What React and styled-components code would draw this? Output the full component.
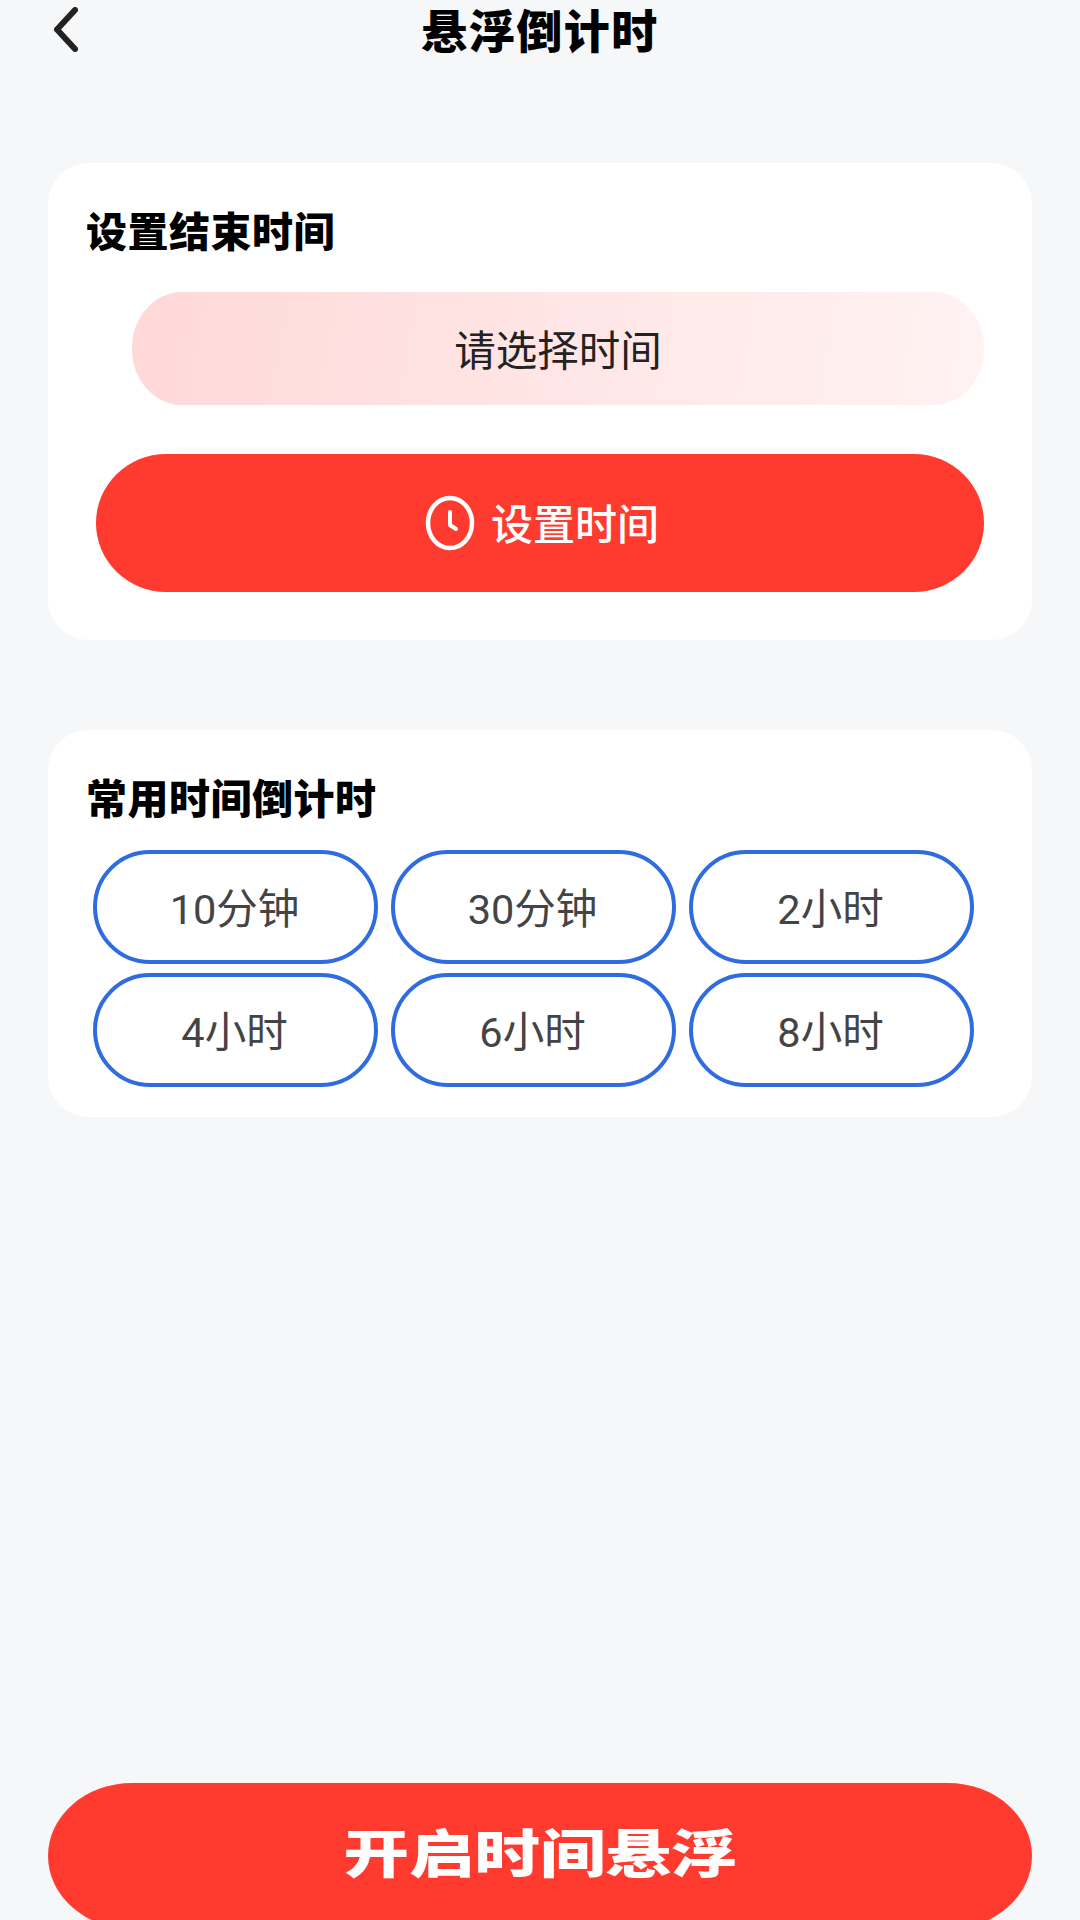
import React from 'react';
import styled, { createGlobalStyle } from 'styled-components';

const presets = ['10分钟', '30分钟', '2小时', '4小时', '6小时', '8小时'];

const GlobalStyle = createGlobalStyle`
    html, body {
        margin: 0;
        padding: 0;
        background: #f6f7f9;
        overflow: hidden;
    }
    * {
        box-sizing: border-box;
    }
`;

const Page = styled.div`
    height: 1920px;
    overflow: hidden;
    display: flex;
    flex-direction: column;
    padding: 0 48px;
    font-family: Roboto, "Noto Sans CJK SC", sans-serif;
`;

const Header = styled.header`
    height: 64px;
    margin: 0 -48px 99px;
    padding: 0 54px;
    flex-shrink: 0;
    display: grid;
    grid-template-columns: 1fr auto 1fr;
    align-items: start;
`;

const BackIcon = styled.svg`
    display: block;
    margin-top: 7px;
    width: 24px;
    height: 45px;
`;

const PageTitle = styled.h1`
    grid-column: 2;
    margin: 4px 0 0;
    font-size: 46px;
    line-height: 56px;
    font-weight: 900;
    letter-spacing: 1.5px;
    color: #000;
`;

const Card = styled.section`
    background: #fff;
    border-radius: 40px;
    padding: 46px 48px ${props => props.$bottom}px;
    margin-top: ${props => props.$top}px;
`;

const SectionTitle = styled.h2`
    margin: 0 0 ${props => props.$gap}px -10px;
    font-size: 41px;
    line-height: 48px;
    font-weight: 900;
    letter-spacing: 0.5px;
    color: #000;
`;

const TimeField = styled.div`
    margin-left: 36px;
    height: 113px;
    padding-bottom: 2px;
    border-radius: 50px / 56px;
    background: linear-gradient(100deg, #ffd8d8, #fff3f3);
    display: flex;
    align-items: center;
    justify-content: center;
    font-size: 41.5px;
    color: #222;
`;

const SetButton = styled.button`
    width: 100%;
    height: 138px;
    margin-top: 49px;
    padding: 0 0 0 4px;
    border: 0;
    border-radius: 70px / 69px;
    background: #ff3b30;
    color: #fff;
    font: inherit;
    font-size: 42px;
    font-weight: 500;
    display: flex;
    align-items: center;
    justify-content: center;
    gap: 16px;
`;

const SetLabel = styled.span`
    margin-bottom: 4px;
`;

const ClockIcon = styled.svg`
    width: 50px;
    height: 56px;
`;

const PresetGrid = styled.div`
    margin-left: -3px;
    display: grid;
    grid-template-columns: repeat(3, 285px);
    grid-auto-rows: 114px;
    column-gap: 13px;
    row-gap: 9px;
`;

const Preset = styled.button`
    border: 4px solid #2f6ce0;
    border-radius: 57px;
    background: #fff;
    color: #444;
    font: inherit;
    font-size: 41.5px;
    padding: 0 2px 3px 0;
`;

const StartButton = styled.button`
    flex-shrink: 0;
    height: 146px;
    margin-top: 666px;
    border: 0;
    border-radius: 84px / 73px;
    background: #ff3b30;
    color: #fff;
    font: inherit;
    display: flex;
    align-items: center;
    justify-content: center;
`;

const StartLabel = styled.span`
    display: inline-block;
    font-size: 52px;
    line-height: 60px;
    font-weight: 900;
    transform: scaleX(1.26);
`;

export default function App() {
    return (
        <Page>
            <GlobalStyle />
            <Header>
                <BackIcon viewBox="0 0 24 45" fill="none">
                    <path d="M21 3 L3 22.5 L21 42" stroke="#222" strokeWidth="6" strokeLinecap="round" strokeLinejoin="round" />
                </BackIcon>
                <PageTitle>悬浮倒计时</PageTitle>
            </Header>
            <Card $top={0} $bottom={48}>
                <SectionTitle $gap={35}>设置结束时间</SectionTitle>
                <TimeField>请选择时间</TimeField>
                <SetButton>
                    <ClockIcon viewBox="0 0 50 56" fill="none" stroke="#fff">
                        <ellipse cx="25" cy="28" rx="22" ry="25" strokeWidth="4.5" />
                        <path d="M25 17 V30 L31 34" strokeWidth="4" strokeLinecap="round" strokeLinejoin="round" />
                    </ClockIcon>
                    <SetLabel>设置时间</SetLabel>
                </SetButton>
            </Card>
            <Card $top={90} $bottom={30}>
                <SectionTitle $gap={26}>常用时间倒计时</SectionTitle>
                <PresetGrid>
                    {presets.map(label => <Preset key={label}>{label}</Preset>)}
                </PresetGrid>
            </Card>
            <StartButton><StartLabel>开启时间悬浮</StartLabel></StartButton>
        </Page>
    );
}
